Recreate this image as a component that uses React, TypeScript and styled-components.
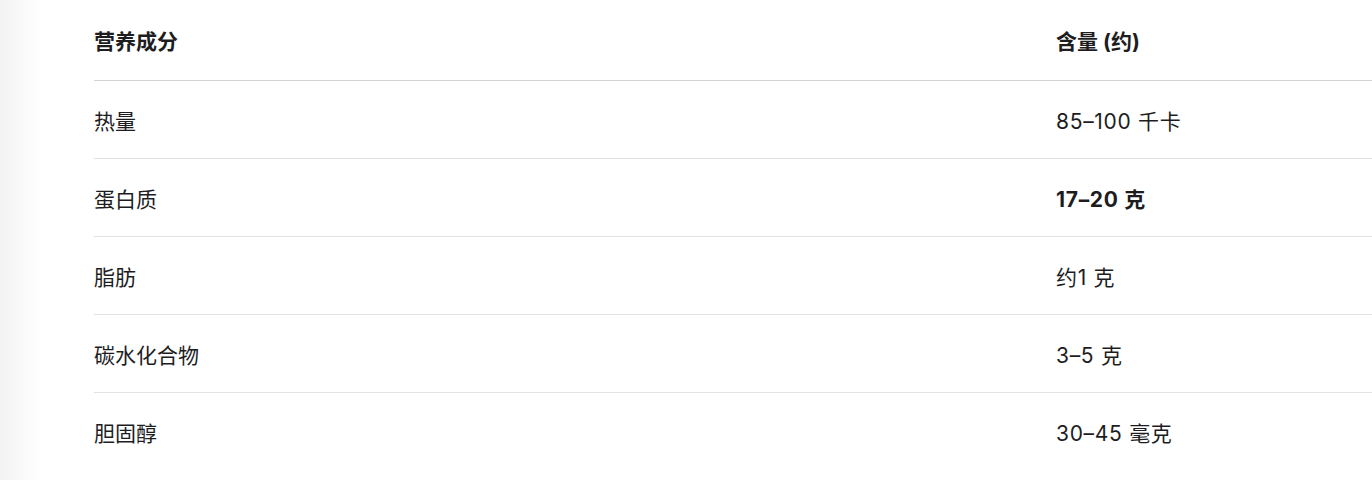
import React from "react";
import styled, { createGlobalStyle } from "styled-components";

const GlobalStyle = createGlobalStyle`
  html, body {
    margin: 0;
    padding: 0;
    background: #fff;
  }
  body {
    font-family: "Inter", "Noto Sans CJK SC", sans-serif;
    color: #1d1d1f;
    overflow: hidden;
  }
`;

const Page = styled.div`
  min-height: 480px;
  padding-left: 94px;
  background: linear-gradient(to right, #f2f2f2 0, #fafafa 24px, #fff 44px);
`;

const Table = styled.div`
  display: flex;
  flex-direction: column;
`;

const Row = styled.div<{ $head?: boolean }>`
  display: grid;
  grid-template-columns: 962px 1fr;
  align-items: center;
  height: ${(p) => (p.$head ? "80px" : "77px")};
  border-bottom: 1px solid ${(p) => (p.$head ? "#d2d2d2" : "#e3e3e3")};
  font-size: 21px;
  font-weight: ${(p) => (p.$head ? 700 : 400)};
  &:last-child {
    border-bottom: none;
  }
`;

const Cell = styled.div<{ $strong?: boolean; $num?: boolean }>`
  white-space: nowrap;
  letter-spacing: ${(p) => (p.$num ? "0.7px" : "0")};
  font-weight: ${(p) => (p.$strong ? 700 : "inherit")};
`;

const rows = [
  { name: "热量", value: "85–100 千卡" },
  { name: "蛋白质", value: "17–20 克", strong: true },
  { name: "脂肪", value: "约1 克" },
  { name: "碳水化合物", value: "3–5 克" },
  { name: "胆固醇", value: "30–45 毫克" },
];

const App = () => {
  return (
    <Page>
      <GlobalStyle />
      <Table>
        <Row $head>
          <Cell>营养成分</Cell>
          <Cell>含量 (约)</Cell>
        </Row>
        {rows.map((r) => (
          <Row key={r.name}>
            <Cell>{r.name}</Cell>
            <Cell $num $strong={r.strong}>
              {r.value}
            </Cell>
          </Row>
        ))}
      </Table>
    </Page>
  );
};

export default App;
